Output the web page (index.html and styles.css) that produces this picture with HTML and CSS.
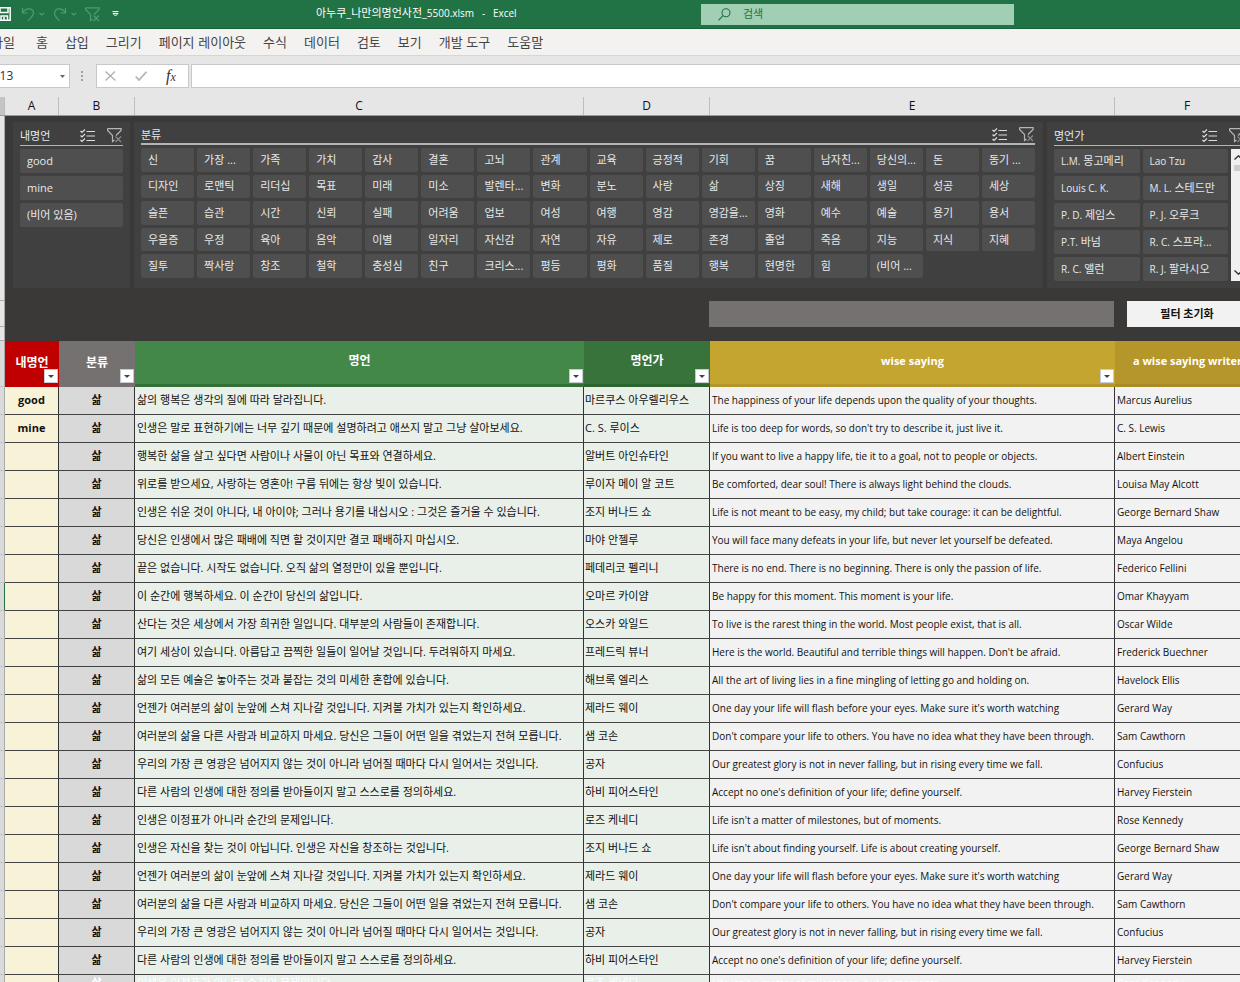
FILE: index.html
```html
<!DOCTYPE html>
<html lang="ko">
<head>
<meta charset="utf-8">
<title>아누쿠_나만의명언사전_5500.xlsm - Excel</title>
<link rel="stylesheet" href="styles.css">
</head>
<body>
<svg class="defs" aria-hidden="true">
  <symbol id="multi" viewBox="0 0 15 14"><path d="M.5 2 2 3.500 5 .5M.5 6.500 2 8 5 5M.5 11 2 12.500 5 9.500M6.500 2.500H15M6.500 7H15M6.500 11.500H15" fill="none" stroke="#dcdcdc" stroke-width="1.200"/></symbol>
  <symbol id="clear" viewBox="0 0 15 15"><path d="M.6.6H14.100V2.500L9 7.500M.6.6V2.500L5.500 7.500V13.500L7.500 12" fill="none" stroke="#b5b5b5" stroke-width="1.200"/><path d="M8.500 8.500 14 14M14 8.500 8.500 14" fill="none" stroke="#8c8c8c" stroke-width="1.100"/></symbol>
</svg>
<header class="titlebar">
  <div class="quick">
    <button aria-label="저장"><svg width="14" height="14" viewBox="0 0 14 14"><path d="M.8.8H13.200V13.200H.8ZM3 1V5.500H11V1M4 13V9H10.500V13M7 10V13" fill="none" stroke="#fff" stroke-width="1.500"/></svg></button>
    <button aria-label="실행 취소"><svg width="25" height="15" viewBox="0 0 25 15"><path d="M1.500 1V6H6.500M1.800 5.800C4 1 12 0 12.500 6C12.500 9 9 11 7 14M18.500 6 20.800 8 23 6" fill="none" stroke="#4f9b70" stroke-width="1.200"/></svg></button>
    <button aria-label="다시 실행"><svg width="25" height="15" viewBox="0 0 25 15"><path d="M12.500 1V6H7.500M12.200 5.800C10 1 1.500 0 1.500 6.500C1.500 9 4 11 6.500 14M18.500 6 20.800 8 23 6" fill="none" stroke="#4f9b70" stroke-width="1.200"/></svg></button>
    <button aria-label="필터 지우기"><svg width="15" height="15" viewBox="0 0 15 15"><path d="M.6.8H14V2.500L9 7.500M.6.8V2.500L5.500 7.500V13.500L7.500 12M8.500 8.500 14 14M14 8.500 8.500 14" fill="none" stroke="#4f9b70" stroke-width="1.200"/></svg></button>
    <button aria-label="빠른 실행 도구 모음"><svg width="7" height="6" viewBox="0 0 7 6"><path d="M.5.6H6.500M1 2.500H6L3.500 5Z" fill="none" stroke="#fff"/></svg></button>
  </div>
  <h1>아누쿠_나만의명언사전_<span class="latin">5500.xlsm&nbsp;&nbsp; -&nbsp;&nbsp; Excel</span></h1>
  <label class="search"><svg width="13" height="13" viewBox="0 0 13 13"><circle cx="8" cy="4.800" r="4" fill="none" stroke="#217346" stroke-width="1.100"/><path d="M5 7.700.5 12.300" stroke="#217346" stroke-width="1.200"/></svg><input type="text" placeholder="검색" aria-label="검색"></label>
</header>
<nav class="tabs">
  <a href="#">파일</a><a href="#">홈</a><a href="#">삽입</a><a href="#">그리기</a><a href="#">페이지 레이아웃</a><a href="#">수식</a><a href="#">데이터</a><a href="#">검토</a><a href="#">보기</a><a href="#">개발 도구</a><a href="#">도움말</a>
</nav>
<div class="formula">
  <div class="namebox"><input type="text" value="A13" aria-label="이름 상자"><button aria-label="이름 목록"><svg width="5" height="3" viewBox="0 0 5 3"><path d="M0 0H5L2.500 3Z" fill="#666"/></svg></button></div>
  <svg class="grip" width="3" height="11" viewBox="0 0 3 11"><path d="M0 0H2V2H0ZM0 4H2V6H0ZM0 8H2V10H0Z" fill="#a0a0a0"/></svg>
  <div class="fxbox">
    <button aria-label="취소"><svg width="11" height="10" viewBox="0 0 11 10"><path d="M.5.5 10.500 9.500M10 .5.5 9.500" stroke="#b0b0b0" stroke-width="1.300"/></svg></button>
    <button aria-label="입력"><svg width="12" height="10" viewBox="0 0 12 10"><path d="M.7 5.500 4 9 11.500.8" fill="none" stroke="#b4b4b4" stroke-width="1.800"/></svg></button>
    <button class="fx" aria-label="함수 삽입">f<small>x</small></button>
  </div>
  <input class="fxinput" type="text" aria-label="수식 입력줄">
</div>
<div class="letters"><span class="corner"></span><span>A</span><span>B</span><span>C</span><span>D</span><span>E</span><span>F</span></div>
<main class="sheet">
<div class="top">
  <div class="rowgutter"><i></i><i></i><i></i></div>
  <div class="panel">
    <div class="slicers">
      <section class="slicer s1">
        <header><h2>내명언</h2><button aria-label="다중 선택"><svg width="15" height="14"><use href="#multi"/></svg></button><button aria-label="필터 지우기"><svg width="15" height="15"><use href="#clear"/></svg></button></header>
        <div class="items"><button>good</button><button>mine</button><button>(비어 있음)</button></div>
      </section>
      <section class="slicer s2">
        <header><h2>분류</h2><button aria-label="다중 선택"><svg width="15" height="14"><use href="#multi"/></svg></button><button aria-label="필터 지우기"><svg width="15" height="15"><use href="#clear"/></svg></button></header>
        <div class="items">
          <button>신</button><button>가장 ...</button><button>가족</button><button>가치</button><button>감사</button><button>결혼</button><button>고뇌</button><button>관계</button><button>교육</button><button>긍정적</button><button>기회</button><button>꿈</button><button>남자친...</button><button>당신의...</button><button>돈</button><button>동기 ...</button>
          <button>디자인</button><button>로맨틱</button><button>리더십</button><button>목표</button><button>미래</button><button>미소</button><button>발렌타...</button><button>변화</button><button>분노</button><button>사랑</button><button>삶</button><button>상징</button><button>새해</button><button>생일</button><button>성공</button><button>세상</button>
          <button>슬픈</button><button>습관</button><button>시간</button><button>신뢰</button><button>실패</button><button>어려움</button><button>업보</button><button>여성</button><button>여행</button><button>영감</button><button>영감을...</button><button>영화</button><button>예수</button><button>예술</button><button>용기</button><button>용서</button>
          <button>우울증</button><button>우정</button><button>육아</button><button>음악</button><button>이별</button><button>일자리</button><button>자신감</button><button>자연</button><button>자유</button><button>제로</button><button>존경</button><button>졸업</button><button>죽음</button><button>지능</button><button>지식</button><button>지혜</button>
          <button>질투</button><button>짝사랑</button><button>창조</button><button>철학</button><button>충성심</button><button>친구</button><button>크리스...</button><button>평등</button><button>평화</button><button>품질</button><button>행복</button><button>현명한</button><button>힘</button><button>(비어 ...</button>
        </div>
      </section>
      <section class="slicer s3">
        <header><h2>명언가</h2><button aria-label="다중 선택"><svg width="15" height="14"><use href="#multi"/></svg></button><button aria-label="필터 지우기"><svg width="15" height="15"><use href="#clear"/></svg></button></header>
        <div class="scroller">
          <div class="items"><button><span class="latin">L.M.</span> 몽고메리</button><button class="latin">Lao Tzu</button><button class="latin">Louis C. K.</button><button><span class="latin">M. L.</span> 스테드만</button><button><span class="latin">P. D.</span> 제임스</button><button><span class="latin">P. J.</span> 오루크</button><button><span class="latin">P.T.</span> 바넘</button><button><span class="latin">R. C.</span> 스프라...</button><button><span class="latin">R. C.</span> 앨런</button><button><span class="latin">R. J.</span> 팔라시오</button></div>
          <div class="bar"><svg width="9" height="5" viewBox="0 0 9 5"><path d="M.5 4.500 4.500.8 8.500 4.500" fill="none" stroke="#333" stroke-width="1.400"/></svg><b></b><svg width="9" height="5" viewBox="0 0 9 5"><path d="M.5.5 4.500 4.200 8.500.5" fill="none" stroke="#333" stroke-width="1.400"/></svg></div>
        </div>
      </section>
    </div>
    <div class="find"><input type="text" aria-label="명언 검색"><button>필터 초기화</button></div>
  </div>
</div>
<table>
<colgroup><col class="cg"><col class="ca"><col class="cb"><col class="cc"><col class="cd"><col class="ce"><col class="cf"></colgroup>
<thead><tr><th></th><th class="ha">내명언<button aria-label="내명언 필터"></button></th><th class="hb">분류<button aria-label="분류 필터"></button></th><th class="hc">명언<button aria-label="명언 필터"></button></th><th class="hd">명언가<button aria-label="명언가 필터"></button></th><th class="he">wise saying<button aria-label="wise saying 필터"></button></th><th class="hf">a wise saying writer</th></tr></thead>
<tbody>
<tr><th></th><td>good</td><td>삶</td><td>삶의 행복은 생각의 질에 따라 달라집니다.</td><td>마르쿠스 아우렐리우스</td><td>The happiness of your life depends upon the quality of your thoughts.</td><td>Marcus Aurelius</td></tr>
<tr><th></th><td>mine</td><td>삶</td><td>인생은 말로 표현하기에는 너무 깊기 때문에 설명하려고 애쓰지 말고 그냥 살아보세요.</td><td>C. S. 루이스</td><td>Life is too deep for words, so don't try to describe it, just live it.</td><td>C. S. Lewis</td></tr>
<tr><th></th><td></td><td>삶</td><td>행복한 삶을 살고 싶다면 사람이나 사물이 아닌 목표와 연결하세요.</td><td>알버트 아인슈타인</td><td>If you want to live a happy life, tie it to a goal, not to people or objects.</td><td>Albert Einstein</td></tr>
<tr><th></th><td></td><td>삶</td><td>위로를 받으세요, 사랑하는 영혼아! 구름 뒤에는 항상 빛이 있습니다.</td><td>루이자 메이 알 코트</td><td>Be comforted, dear soul! There is always light behind the clouds.</td><td>Louisa May Alcott</td></tr>
<tr><th></th><td></td><td>삶</td><td>인생은 쉬운 것이 아니다, 내 아이야; 그러나 용기를 내십시오 : 그것은 즐거울 수 있습니다.</td><td>조지 버나드 쇼</td><td>Life is not meant to be easy, my child; but take courage: it can be delightful.</td><td>George Bernard Shaw</td></tr>
<tr><th></th><td></td><td>삶</td><td>당신은 인생에서 많은 패배에 직면 할 것이지만 결코 패배하지 마십시오.</td><td>마야 안젤루</td><td>You will face many defeats in your life, but never let yourself be defeated.</td><td>Maya Angelou</td></tr>
<tr><th></th><td></td><td>삶</td><td>끝은 없습니다. 시작도 없습니다. 오직 삶의 열정만이 있을 뿐입니다.</td><td>페데리코 펠리니</td><td>There is no end. There is no beginning. There is only the passion of life.</td><td>Federico Fellini</td></tr>
<tr class="active"><th></th><td></td><td>삶</td><td>이 순간에 행복하세요. 이 순간이 당신의 삶입니다.</td><td>오마르 카이얌</td><td>Be happy for this moment. This moment is your life.</td><td>Omar Khayyam</td></tr>
<tr><th></th><td></td><td>삶</td><td>산다는 것은 세상에서 가장 희귀한 일입니다. 대부분의 사람들이 존재합니다.</td><td>오스카 와일드</td><td>To live is the rarest thing in the world. Most people exist, that is all.</td><td>Oscar Wilde</td></tr>
<tr><th></th><td></td><td>삶</td><td>여기 세상이 있습니다. 아름답고 끔찍한 일들이 일어날 것입니다. 두려워하지 마세요.</td><td>프레드릭 뷰너</td><td>Here is the world. Beautiful and terrible things will happen. Don't be afraid.</td><td>Frederick Buechner</td></tr>
<tr><th></th><td></td><td>삶</td><td>삶의 모든 예술은 놓아주는 것과 붙잡는 것의 미세한 혼합에 있습니다.</td><td>해브록 엘리스</td><td>All the art of living lies in a fine mingling of letting go and holding on.</td><td>Havelock Ellis</td></tr>
<tr><th></th><td></td><td>삶</td><td>언젠가 여러분의 삶이 눈앞에 스쳐 지나갈 것입니다. 지켜볼 가치가 있는지 확인하세요.</td><td>제라드 웨이</td><td>One day your life will flash before your eyes. Make sure it's worth watching</td><td>Gerard Way</td></tr>
<tr><th></th><td></td><td>삶</td><td>여러분의 삶을 다른 사람과 비교하지 마세요. 당신은 그들이 어떤 일을 겪었는지 전혀 모릅니다.</td><td>샘 코손</td><td>Don't compare your life to others. You have no idea what they have been through.</td><td>Sam Cawthorn</td></tr>
<tr><th></th><td></td><td>삶</td><td>우리의 가장 큰 영광은 넘어지지 않는 것이 아니라 넘어질 때마다 다시 일어서는 것입니다.</td><td>공자</td><td>Our greatest glory is not in never falling, but in rising every time we fall.</td><td>Confucius</td></tr>
<tr><th></th><td></td><td>삶</td><td>다른 사람의 인생에 대한 정의를 받아들이지 말고 스스로를 정의하세요.</td><td>하비 피어스타인</td><td>Accept no one's definition of your life; define yourself.</td><td>Harvey Fierstein</td></tr>
<tr><th></th><td></td><td>삶</td><td>인생은 이정표가 아니라 순간의 문제입니다.</td><td>로즈 케네디</td><td>Life isn't a matter of milestones, but of moments.</td><td>Rose Kennedy</td></tr>
<tr><th></th><td></td><td>삶</td><td>인생은 자신을 찾는 것이 아닙니다. 인생은 자신을 창조하는 것입니다.</td><td>조지 버나드 쇼</td><td>Life isn't about finding yourself. Life is about creating yourself.</td><td>George Bernard Shaw</td></tr>
<tr><th></th><td></td><td>삶</td><td>언젠가 여러분의 삶이 눈앞에 스쳐 지나갈 것입니다. 지켜볼 가치가 있는지 확인하세요.</td><td>제라드 웨이</td><td>One day your life will flash before your eyes. Make sure it's worth watching</td><td>Gerard Way</td></tr>
<tr><th></th><td></td><td>삶</td><td>여러분의 삶을 다른 사람과 비교하지 마세요. 당신은 그들이 어떤 일을 겪었는지 전혀 모릅니다.</td><td>샘 코손</td><td>Don't compare your life to others. You have no idea what they have been through.</td><td>Sam Cawthorn</td></tr>
<tr><th></th><td></td><td>삶</td><td>우리의 가장 큰 영광은 넘어지지 않는 것이 아니라 넘어질 때마다 다시 일어서는 것입니다.</td><td>공자</td><td>Our greatest glory is not in never falling, but in rising every time we fall.</td><td>Confucius</td></tr>
<tr><th></th><td></td><td>삶</td><td>다른 사람의 인생에 대한 정의를 받아들이지 말고 스스로를 정의하세요.</td><td>하비 피어스타인</td><td>Accept no one's definition of your life; define yourself.</td><td>Harvey Fierstein</td></tr>
<tr class="next"><th></th><td></td><td>삶</td><td>인생은 이정표가 아니라 순간의 문제입니다.</td><td>로즈 케네디</td><td>Life isn't a matter of milestones, but of moments.</td><td>Rose Kennedy</td></tr>
</tbody>
</table>
</main>
</body>
</html>
```

FILE: styles.css
```css
* { box-sizing: border-box; }
:root { --cols: 5px 54px 76px 449px 126px 405px 145px; }
body { margin: 0; height: 100vh; overflow: hidden; display: flex; flex-direction: column; background: #e6e6e6; color: #111; font: 11px/16px "Open Sans", "Noto Sans CJK KR", sans-serif; }
button, input { font: inherit; color: inherit; border: 0; padding: 0; margin: 0; background: none; border-radius: 0; }
h1, h2 { margin: 0; font: inherit; }
svg { display: block; flex: none; }
.defs { position: absolute; width: 0; height: 0; }
.latin { font-size: 10px; }

.titlebar { display: flex; align-items: center; height: 29px; flex: none; background: #217346; color: #fff; border-bottom: 1px solid #17633a; }
.quick { display: flex; align-items: center; gap: 7px; width: 319px; margin-left: -3px; }
.quick button:nth-child(2) { margin-left: 3px; }
.quick button:nth-child(5) { margin-left: 5px; }
.titlebar h1 { width: 385px; padding-bottom: 2px; }
.search { display: flex; align-items: center; gap: 12px; width: 313px; height: 21px; padding-left: 17px; background: #a0cfb4; }
.search input { width: 200px; }
.search input::placeholder { color: #217346; opacity: 1; }

.tabs { display: flex; align-items: center; gap: 17px; height: 27px; flex: none; margin-left: -9px; background: #f3f2f1; border-bottom: 1px solid #d6d6d6; font: 13px/18px "Noto Sans CJK KR", sans-serif; }
.tabs a { color: #444; text-decoration: none; }
.tabs a:first-child { margin-right: 4px; }

.formula { display: flex; align-items: center; height: 41px; flex: none; padding-bottom: 1px; }
.formula > div, .fxinput { height: 24px; background: #fff; border: 1px solid #c8c8c8; display: flex; align-items: center; }
.namebox { width: 79px; margin-left: -9px; font-size: 12px; color: #333; }
.namebox input { width: 68px; }
.grip { margin: 0 12px 0 11px; }
.fxbox { width: 93px; gap: 19px; padding-left: 8px; }
.fx { font: italic 16px/18px "Liberation Serif", serif; color: #333; }
.fx small { font-size: 12px; }
.fxinput { flex: 1; margin-left: 2px; border-right: 0; }

.letters { display: grid; grid-template-columns: var(--cols); height: 19px; flex: none; border-bottom: 1px solid #999; font-size: 12px; line-height: 17px; text-align: center; }
.letters span { border-right: 1px solid #bdbdbd; }
.corner { background: #c4c4c4; }

.sheet { flex: 1; overflow: hidden; }
.top { display: flex; height: 225px; }
.rowgutter { width: 5px; flex: none; border-right: 1px solid #aaa; display: flex; flex-direction: column; }
.rowgutter i { border-bottom: 1px solid #aaa; height: 14px; }
.rowgutter i:first-child { height: 186px; }
.rowgutter i:nth-child(2) { height: 26px; }
.panel { flex: 1; min-width: 0; overflow: hidden; background: #3b3838; }
.slicers { display: flex; gap: 4px; padding: 6px 0 0 8px; }
.slicer { flex: none; height: 166px; padding: 4px 7px 0; background: #404040; color: #e8e8e8; }
.slicer header { display: flex; align-items: center; height: 20px; gap: 12px; padding-right: 1px; border-bottom: 1px solid #b4b4b4; }
.slicer h2 { flex: 1; }
.slicer .items { display: grid; gap: 3px; margin-top: 3px; }
.items button { text-align: left; padding-left: 7px; background: #4f4f4f; border-radius: 2px; white-space: nowrap; }
.s1 { width: 117px; }
.s1 .items, .s3 .items { grid-auto-rows: 24px; }
.s2 { width: 909px; padding-right: 8px; }
.slicer.s2 header { height: 19px; border-width: 2px; }
.s2 .items { grid-template-columns: repeat(16, 1fr); grid-template-rows: repeat(5, 1fr); height: 130px; }
.s3 { width: 205px; }
.scroller { display: flex; gap: 3px; }
.s3 .items { flex: none; width: 174px; grid-template-columns: 1fr 1fr; }
.bar { width: 17px; margin-top: 3px; padding: 6px 3px; background: #f0f0f0; display: flex; flex-direction: column; justify-content: space-between; flex: none; }
.bar b { height: 6px; background: #cdcdcd; margin-bottom: auto; margin-top: 5px; }
.find { display: flex; gap: 13px; margin: 13px 0 0 704px; }
.find input { width: 405px; height: 26px; flex: none; background: #767171; }
.find button { width: 120px; height: 26px; flex: none; background: #f2f2f2; color: #111; font-weight: 700; }

table { table-layout: fixed; width: 1260px; border-collapse: separate; border-spacing: 0; }
.cg { width: 5px; } .ca { width: 54px; } .cb { width: 76px; } .cc { width: 449px; } .cd { width: 126px; } .ce { width: 405px; } .cf { width: 145px; }
th, td { padding: 0; white-space: nowrap; overflow: hidden; }
thead th { position: relative; height: 46px; padding-bottom: 3px; font-size: 12px; font-weight: 700; color: #fff; }
th:first-child { background: #dadada; border-right: 1px solid #aaa; border-bottom: 1px solid #c4c4c4; }
.ha { background: #c00000; } .hb { background: #767171; }
.hc { background: #448849; border-bottom: 3px solid #327038; }
.hd { background: #39733c; border-bottom: 3px solid #2c642f; }
.he { background: #c4a530; border-bottom: 3px solid #b5962a; }
.hf { background: #b5962a; border-bottom: 3px solid #a98c26; }
thead .he, thead .hf { font-size: 11px; }
thead button { position: absolute; right: 1px; bottom: 4px; width: 14px; height: 14px; background: #fff; border: 1px solid #c5cbd5; }
.hc button, .hd button, .he button { bottom: 1px; }
thead button::after { content: ""; position: absolute; left: 3px; top: 5px; border: 3px solid transparent; border-top-color: #444; border-bottom: 0; }
td { height: 28px; padding: 0 2px 1px; border-right: 1px solid #333; border-bottom: 1px solid #444; background: #f2f2f2; }
td:nth-child(2) { background: #f8f2d8; text-align: center; font-weight: 700; }
td:nth-child(3) { background: #d9d9d9; text-align: center; font-weight: 700; }
td:nth-child(4), td:nth-child(5) { background: #e8f0e9; }
td:nth-child(5) { padding-left: 1px; }
td:nth-child(6), td:nth-child(7) { font-size: 10px; }
.active th:first-child { border-right-color: #217346; }
.next td { color: #fff; vertical-align: top; }
```
